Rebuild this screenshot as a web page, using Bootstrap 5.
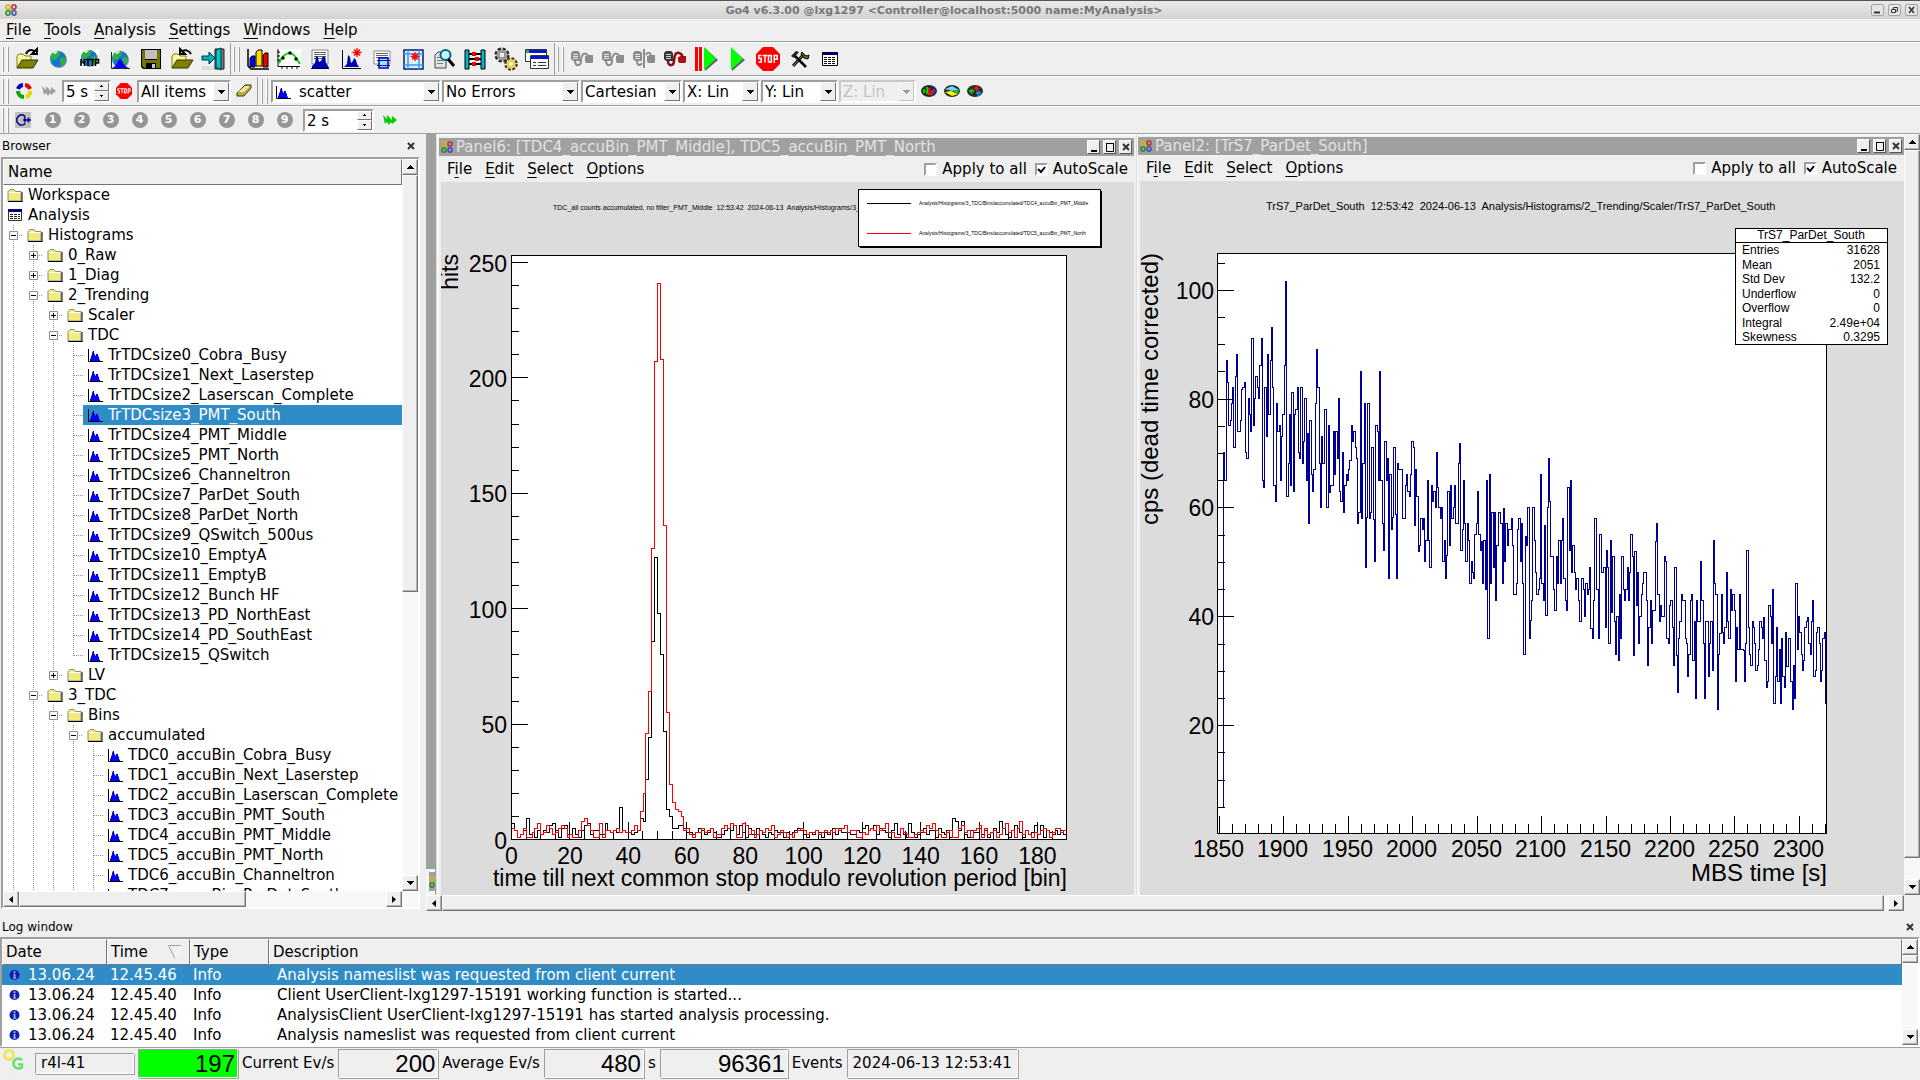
<!DOCTYPE html>
<html lang="en">
<head>
<meta charset="utf-8">
<meta name="viewport" content="width=device-width, initial-scale=1">
<title>Go4 v6.3.00</title>
<link href="https://cdn.jsdelivr.net/npm/bootstrap@5.3.0/dist/css/bootstrap.min.css" rel="stylesheet">
<script src="https://cdn.jsdelivr.net/npm/bootstrap@5.3.0/dist/js/bootstrap.bundle.min.js"></script>
<style>
  :root { --face:#efefef; --dark:#9f9f9f; --deep:#767472; --sel:#308cc6; }
  html, body { height:100%; }
  body { background:var(--face); color:#000; font:15px/20px "DejaVu Sans", sans-serif; overflow:hidden; }
  body > * { flex:none; }
  body > main { flex:1 1 0; min-height:0; }
  a, a:hover { color:inherit; text-decoration:none; }
  button { background:none; border:0; padding:0; color:inherit; }
  svg { display:block; flex:none; }
  u { text-underline-offset:3px; text-decoration-thickness:1px; }
  .ellip { overflow:hidden; white-space:nowrap; }

  .caption { height:19px; border-top:1px solid #55545c; background:linear-gradient(#ebe9e8,#d3d2d0); font-size:11px; line-height:17px; font-weight:bold; color:#76777e; padding:0 2px 0 5px; }
  .cap-btn { width:13px; height:12px; border:1px solid #a3a2a0; border-radius:2px; background:#e6e5e4; }
  .menu { gap:13px; padding-left:6px; }
  .mainmenu { height:23px; border-bottom:1px solid var(--dark); }
  .bar { border-top:1px solid #fff; border-bottom:1px solid var(--dark); }
  .bar-a { height:34px; } .bar-b { height:30px; gap:1px; } .bar-c { height:28px; }
  .grip { width:6px; height:25px; border:solid var(--dark); border-width:0 1px; box-shadow:-1px 0 #fff, inset -1px 0 #fff; margin:0 2px 0 3px; flex:none; }
  .sepa { width:1px; align-self:stretch; background:var(--dark); }
  .bar-a .sepa { margin-left:2px; }
  .tool { width:31px; height:28px; display:flex; align-items:center; justify-content:center; flex:none; }
  .tool-s { width:24px; } .tool-n { width:29px; } .tool-c { width:23px; }
  .num { width:16px; height:16px; border-radius:50%; background:#959595; color:#fff; font-size:11px; line-height:16px; font-weight:bold; }

  .sunk { border:2px solid; border-color:var(--dark) #fff #fff var(--dark); background:#fff; }
  .field { position:relative; height:23px; flex:none; }
  .field select, .field input { appearance:none; width:100%; height:100%; border:0; background:none; outline:0; padding:0 18px 0 2px; font:inherit; color:inherit; line-height:18px; }
  .drop::after { content:""; position:absolute; right:0; top:0; width:16px; height:19px; border:1px solid; border-color:#fff var(--deep) var(--deep) #fff;
    background:linear-gradient(#000,#000) 4px 7px/7px 1px no-repeat, linear-gradient(#000,#000) 5px 8px/5px 1px no-repeat, linear-gradient(#000,#000) 6px 9px/3px 1px no-repeat, linear-gradient(#000,#000) 7px 10px/1px 1px no-repeat, var(--face); pointer-events:none; }
  .drop.off { background:var(--face); color:#c3c3c3; border-color:#c8c8c8 #fff #fff #c8c8c8; }
  .drop.off::after { opacity:.35; }
  .drop.off select { color:#c3c3c3; opacity:1; }
  .drop.pic select { padding-left:26px; }
  .drop.pic svg { position:absolute; left:2px; top:2px; }
  .steps { position:absolute; right:0; top:0; width:15px; height:19px; display:flex; flex-direction:column; }
  .step { flex:1; border:1px solid; border-color:#fff var(--deep) var(--deep) #fff; background:var(--face); display:flex; align-items:center; justify-content:center; }
  .w-5s { width:49px; } .w-all { width:94px; } .w-hist { width:170px; } .w-err { width:138px; } .w-cart { width:101px; } .w-ax { width:77px; } .w-2s { width:71px; }
  .combos { gap:1px; }

  .dock { width:420px; margin-right:6px; flex:none; padding:0 0 2px 1px; }
  .dock-head { font-size:12px; line-height:24px; height:23px; padding:0 5px 0 1px; }
  .log-head { height:26px; padding:6px 6px 0 2px; }
  .frame { border:2px solid; border-color:var(--dark) #fff #fff var(--dark); }
  .colhead { background:var(--face); border:1px solid; border-color:#fff var(--deep) var(--deep) #fff; height:26px; line-height:24px; }
  .tree { background:#fff; }
  .node { display:flex; height:20px; align-items:center; }
  .node-in { display:flex; flex:1; align-items:center; gap:5px; padding-left:4px; height:20px; white-space:nowrap; min-width:0; }
  .node-in.on { background:var(--sel); color:#fff; }
  .sb { background:#f8f8f8; display:flex; flex:none; }
  .sb-v { flex-direction:column; width:16px; } .sb-h { height:16px; }
  .sb-b, .sb-t { background:var(--face); border:1px solid; border-color:#fff var(--deep) var(--deep) #fff; box-shadow:inset -1px -1px #b5b5b5; }
  .sb-b { width:16px; height:16px; flex:none; display:flex; align-items:center; justify-content:center; }

  .mdi { background:#a0a0a0; position:relative; padding-left:10px; }
  .mini { position:absolute; left:0; bottom:0; width:9px; height:26px; overflow:hidden; background:#a0a0a0; border:solid #f4f4f4; border-width:3px 0 4px 3px; padding-top:4px; }
  .win { background:var(--face); border-left:1px solid #dcdcdc; box-shadow:inset 1px 1px #fff; padding:4px 2px 0; min-width:0; }
  .win-a { flex:1 1 700px; } .win-b { flex:1 1 768px; padding:3px 0 0 1px; }
  .win-cap { background:#a0a0a0; color:#e2e2e2; height:18px; line-height:18px; padding:0 2px; gap:3px; }
  .win-btn { width:13px; height:14px; background:var(--face); border:1px solid; border-color:#fff #555 #555 #fff; display:flex; align-items:center; justify-content:center; }
  .win-menu { height:26px; padding-left:8px; padding-right:7px; }
  .win-a .win-menu { padding-right:6px; }
  .tick { appearance:none; width:13px; height:13px; border:2px solid; border-color:var(--dark) #fff #fff var(--dark); background:#fff; margin:0 5px 0 8px; flex:none; }
  .tick:checked { background:#fff url("data:image/svg+xml,%3Csvg xmlns='http://www.w3.org/2000/svg' viewBox='0 0 9 9'%3E%3Cpath d='M1 4l3 3 4-5' fill='none' stroke='%23000' stroke-width='2'/%3E%3C/svg%3E"); }
  .canvas { background:#dcdcdc; margin-left:2px; overflow:hidden; min-height:0; }
  .canvas svg { width:100%; height:100%; font-family:"Liberation Sans", sans-serif; }
  .t5 { font-size:5px; } .t7 { font-size:7px; } .t11 { font-size:11px; } .t12 { font-size:12px; } .t23 { font-size:23px; } .t24 { font-size:24px; }
  .mid { text-anchor:middle; } .fin { text-anchor:end; }
  .ln { fill:none; stroke:#000; shape-rendering:crispEdges; }

  .logs { width:100%; table-layout:fixed; border-collapse:separate; border-spacing:0; background:#fff; }
  .logs th { font-weight:normal; text-align:left; padding:0 3px; }
  .logs td { height:20px; padding:0 3px; white-space:nowrap; overflow:hidden; }
  .logs td:last-child { padding-left:8px; }
  .logs tr.on td { background:var(--sel); color:#fff; }
  .c-date { width:105px; } .c-time { width:83px; } .c-type { width:79px; }
  .logbody { height:110px; }

  .status { height:33px; border-top:1px solid var(--dark); padding:0 2px 2px; }
  .cell { border:1px solid; border-color:var(--dark) #fff #fff var(--dark); box-shadow:1px 1px var(--dark); }
  .host { width:99px; height:21px; padding-left:5px; line-height:19px; margin:0 4px 0 11px; }
  .lcd { width:100px; height:29px; text-align:right; font:24px/28px "Liberation Sans", sans-serif; padding-right:2px; }
  .lcd-go { background:#0f0; }
  .lcd-w { width:128px; }
  .clock { height:29px; line-height:27px; padding:0 5px; }
</style>
</head>
<body class="d-flex flex-column">

<svg width="0" height="0" class="position-absolute" aria-hidden="true">
  <defs>
    <symbol id="rings" viewBox="0 0 12 12"><g fill="none" stroke-width="1.6"><ellipse cx="3" cy="3" rx="2" ry="2.2" stroke="#d9b21c"/><ellipse cx="9" cy="3" rx="2" ry="2.2" stroke="#b8343c"/><ellipse cx="3" cy="9" rx="2" ry="2.2" stroke="#2c8c34"/><ellipse cx="9" cy="9" rx="2" ry="2.2" stroke="#4450c0"/></g><path d="M5 5h2v2H5z" fill="#4be04b"/></symbol>
    <symbol id="hist" viewBox="0 0 16 16"><path d="M1.500 2v12.500H16" fill="none" stroke="#000"/><path d="M3 13v-1l1-1V9l1-1V6l1-2h1v2l1 2 1 1V7h2v2l1 1v2l1 1v1H3z" fill="#00f"/><path d="M6.500 4v5" stroke="#00008b"/></symbol>
    <symbol id="folder" viewBox="0 0 16 16"><path d="M1 14V4.500L3 2.500h4l1.500 2H14V14z" fill="#f1ec7c" stroke="#8a8a8a"/><path d="M2 5.500h11.500" stroke="#fff"/><path d="M15 5v10M1 14.500h14.500" stroke="#000" fill="none"/></symbol>
    <symbol id="sheet" viewBox="0 0 16 16"><path d="M1.500 2.500h13v11h-13z" fill="#fff" stroke="#333"/><path d="M1 2h14v3H1z" fill="#00007a"/><path d="M3 7.500h10M3 9.500h10M3 11.500h10" stroke="#222" stroke-dasharray="3 1"/></symbol>
    <symbol id="gb" viewBox="0 0 20 20"><path d="M10.500 0v20" stroke="#8f8f8f" stroke-dasharray="1 1"/></symbol>
    <symbol id="gt" viewBox="0 0 20 20"><path d="M10.500 0v20M11 10.500h9" stroke="#8f8f8f" stroke-dasharray="1 1"/></symbol>
    <symbol id="gl" viewBox="0 0 20 20"><path d="M10.500 0v11M11 10.500h9" stroke="#8f8f8f" stroke-dasharray="1 1"/></symbol>
    <symbol id="gm" viewBox="0 0 20 20"><path d="M10.500 0v20M16 10.500h4" stroke="#8f8f8f" stroke-dasharray="1 1"/><path d="M6.500 6.500h8v8h-8z" fill="#fff" stroke="#8f8f8f"/><path d="M8 10.500h5" stroke="#000"/></symbol>
    <symbol id="gp" viewBox="0 0 20 20"><path d="M10.500 0v20M16 10.500h4" stroke="#8f8f8f" stroke-dasharray="1 1"/><path d="M6.500 6.500h8v8h-8z" fill="#fff" stroke="#8f8f8f"/><path d="M8 10.500h5M10.500 8v5" stroke="#000"/></symbol>
    <symbol id="gq" viewBox="0 0 20 20"><path d="M10.500 0v7M16 10.500h4" stroke="#8f8f8f" stroke-dasharray="1 1"/><path d="M6.500 6.500h8v8h-8z" fill="#fff" stroke="#8f8f8f"/><path d="M8 10.500h5M10.500 8v5" stroke="#000"/></symbol>
    <symbol id="up" viewBox="0 0 7 4"><path d="M3 0h1v1h1v1h1v1h1v1H0V3h1V2h1V1h1z"/></symbol>
    <symbol id="dn" viewBox="0 0 7 4"><path d="M0 0h7v1H6v1H5v1H4v1H3V3H2V2H1V1H0z"/></symbol>
    <symbol id="lf" viewBox="0 0 4 7"><path d="M4 0v7L0 3.500z"/></symbol>
    <symbol id="rt" viewBox="0 0 4 7"><path d="M0 0v7l4-3.500z"/></symbol>
    <symbol id="x" viewBox="0 0 8 8"><path d="M1 1l6 6M7 1L1 7" stroke="#333" stroke-width="2"/></symbol>
    <symbol id="info" viewBox="0 0 12 12"><circle cx="6" cy="6" r="5.500" fill="#0a1ab4"/><path d="M5 2h2v2H5zM5 5h2v4h1v1H4.500V9H5z" fill="#a9b4f2"/></symbol>
    <symbol id="globe" viewBox="0 0 24 24"><circle cx="13" cy="13" r="8" fill="#333" opacity=".5"/><circle cx="12" cy="12" r="8" fill="#1676c8"/><path d="M5 8c2-4 7-5 10-3l-2 2 1 2-3 1-1 3-3-1-1 3c-2-2-2-5-1-7zM14 11l4-1 2 2-2 5-3 2-1-4z" fill="#2fae4a"/><path d="M7 6c1-2 4-2 5-1l-3 2z" fill="#e7f8e0"/></symbol>
    <symbol id="openf" viewBox="0 0 24 24"><path d="M2 21V9l2-2h4l2 2h6v4" fill="#f6f6a8" stroke="#808000"/><path d="M2 21l5-8h16l-5 8z" fill="#808000" stroke="#333300"/></symbol>
    <symbol id="stop" viewBox="0 0 24 24"><path d="M7 0h10l7 7v10l-7 7H7l-7-7V7z" fill="#f00"/><g fill="none" stroke="#fff" stroke-width="1.500"><path d="M5.500 8.500H2.800v3h2.500v3.500H2.500M6.500 8.500h5M9 8.500v7M12.500 8.500h2.800v6.500h-2.800zM18.200 16V8.500h3v3.800h-3"/></g></symbol>
    <symbol id="arrows" viewBox="0 0 14 12"><path d="M0 1l4 4V1l5 5V2l5 4-5 4-1-2-2 3-2-3-2 2z"/></symbol>
    <symbol id="plug" viewBox="0 0 24 24"><path d="M1 6l2-2h5l2 2v8H3l-2-2z"/><path d="M3 7.500h5M3 9.500h5M3 11.500h5" stroke="#fff" stroke-width=".8"/><path d="M18 8h5v7l-1 1h-6l-1-2V9z"/></symbol>
    <symbol id="pie" viewBox="0 0 16 16"><ellipse cx="8" cy="8" rx="8" ry="6" fill="#2a2a2a"/></symbol>
  </defs>
</svg>

<header class="caption d-flex align-items-center">
  <svg width="12" height="12"><use href="#rings"/></svg>
  <div class="flex-grow-1 text-center ellip">Go4 v6.3.00 @lxg1297 &lt;Controller@localhost:5000 name:MyAnalysis&gt;</div>
  <div class="d-flex gap-1">
    <button class="cap-btn" aria-label="Minimize"><svg width="11" height="10"><path d="M2 7.500h6" stroke="#333" stroke-width="2"/></svg></button>
    <button class="cap-btn" aria-label="Restore"><svg width="11" height="10"><path d="M2.500 4.500h4v3h-4zM4.500 4V2.500h4v3.500H7" fill="none" stroke="#333"/></svg></button>
    <button class="cap-btn" aria-label="Close"><svg width="11" height="10"><path d="M3 2l5 6M8 2L3 8" stroke="#333" stroke-width="1.500"/></svg></button>
  </div>
</header>

<nav class="mainmenu menu d-flex align-items-center">
  <a href="#"><u>F</u>ile</a><a href="#"><u>T</u>ools</a><a href="#"><u>A</u>nalysis</a><a href="#"><u>S</u>ettings</a><a href="#"><u>W</u>indows</a><a href="#"><u>H</u>elp</a>
</nav>

<div class="bar bar-a d-flex align-items-center" role="toolbar" aria-label="Main tools">
  <i class="grip"></i>
  <button class="tool" aria-label="Open file"><svg width="24" height="24"><use href="#openf"/><path d="M11 7c2-5 7-5 9-2M22 2v5h-5z" fill="none" stroke="#000" stroke-width="2"/></svg></button>
  <button class="tool" aria-label="Open remote"><svg width="24" height="24"><use href="#globe"/></svg></button>
  <button class="tool" aria-label="Open HTTP"><svg width="24" height="24"><path d="M3 2h19v19H3z" fill="#fff"/><use href="#globe" y="-1"/><path d="M4 12v7M4 15.500h3.500M7.500 12v7M9 12.500h4M11 12.500V19M13 12.500h4M15.500 12.500V19M18.500 19v-6.500h3V16h-3" stroke="#000" stroke-width="1.600" fill="none"/></svg></button>
  <button class="tool" aria-label="Open histogram server"><svg width="24" height="24"><use href="#globe"/><path d="M4 21c5-1 6-9 8-9s4 8 9 9z" fill="#00f"/><path d="M3.500 5v16.500H22" stroke="#222" fill="none"/></svg></button>
  <button class="tool" aria-label="Save"><svg width="24" height="24"><path d="M2 2h20v20H4l-2-2z" fill="#000"/><path d="M3 3h3v10h12V3h3v18H5l-2-2z" fill="#737300"/><path d="M6 3h12v9H6z" fill="#c0c0c0"/><path d="M7 16h10v5H7z" fill="#000"/><path d="M13 17h3v4h-3z" fill="#c8c8c8"/></svg></button>
  <button class="tool" aria-label="Reopen"><svg width="24" height="24"><use href="#openf"/><path d="M21 7c-2-4-7-5-9-2M10 2v5h5z" fill="none" stroke="#000" stroke-width="2"/></svg></button>
  <button class="tool" aria-label="Exit"><svg width="24" height="24"><path d="M1 19h22v4H1z" fill="#ddd"/><path d="M14 2h9v20h-9z" fill="#777" stroke="#222"/><path d="M15 3l5-2v22l-5-3z" fill="#00c8d2" stroke="#033"/><path d="M1 9h7V5l6 6-6 6v-4H1z" fill="#00b4be" stroke="#033"/></svg></button>
  <i class="sepa"></i><i class="grip"></i>
  <button class="tool" aria-label="New panel"><svg width="24" height="24"><path d="M2 2v17l3 3h18" stroke="#000" fill="none" stroke-width="1.500"/><path d="M4 11l2-2h3v11H4z" fill="#00f" stroke="#000"/><path d="M10 5l2-2h4v16h-6z" fill="#ffd800" stroke="#000"/><path d="M17 8l2-2h3v14h-5z" fill="#e00" stroke="#000"/></svg></button>
  <button class="tool" aria-label="Fit panel"><svg width="24" height="24"><path d="M0 2h24v20H0z" fill="#fff"/><path d="M2 16C6 7 10 6 13 6s6 4 10 11" stroke="#0d0" stroke-width="2" fill="none"/><path d="M1 2v17.500h22M5 19v3M10 19v3M15 19v3M20 19v3M0 5h3M0 9h3M0 13h3" stroke="#000" fill="none"/><circle cx="6" cy="11" r="1.700"/><circle cx="13" cy="6" r="1.700"/><circle cx="19" cy="12" r="1.700"/></svg></button>
  <button class="tool" aria-label="Histogram properties"><svg width="24" height="24"><path d="M4 3h16v14H4z" fill="#fff" stroke="#888"/><path d="M6 5.500h12M6 7.500h12M6 9.500h12M6 11.500h12" stroke="#666"/><path d="M4 21v-2l3-3 1-7 2 1 1 5 2-1 2-5 2 1 1 6 2 3 1 2z" fill="#0000b0"/><path d="M3 21.500h18" stroke="#003"/></svg></button>
  <button class="tool" aria-label="Create histogram"><svg width="24" height="24"><path d="M3.500 3v18.500H22" stroke="#000" fill="none"/><path d="M5 20l3-3 1-9 2 2 1 6 2-2 1-3 2 2 1 4 2 3z" fill="#0000b8"/><path d="M18 1v9M13.500 5.500h9M15 2.500l6 6M21 2.500l-6 6" stroke="#f00" stroke-width="1.300"/></svg></button>
  <button class="tool" aria-label="Condition"><svg width="24" height="24"><path d="M4 4h16v13H4z" fill="#fff" stroke="#888"/><path d="M6 6.500h12M6 8.500h12M6 10.500h12" stroke="#666"/><path d="M9 11h9v10H9z" fill="#9fe0ff" stroke="#0000c0" stroke-width="1.500"/><path d="M7 13.500h13M7 18.500h13" stroke="#0000c0"/></svg></button>
  <button class="tool" aria-label="Create condition"><svg width="24" height="24"><path d="M3 3h19v19H3z" fill="#dff0ff" stroke="#00207a" stroke-width="1.500"/><path d="M7 3v19M18 3v19M3 7h19M3 18h19" stroke="#3a9ae8" stroke-width="1.500"/><path d="M14 5v9M9.500 9.500h9M11 6.500l6 6M17 6.500l-6 6" stroke="#f00" stroke-width="1.300"/></svg></button>
  <button class="tool" aria-label="Event info"><svg width="24" height="24"><path d="M3 8l3-3h8v16H3z" fill="#e4e4e4" stroke="#444"/><path d="M5 10.500h6M5 13.500h6M5 16.500h6" stroke="#777"/><circle cx="13.500" cy="8" r="5" fill="#c8f4f6" stroke="#068" stroke-width="2"/><path d="M16 12l6 7" stroke="#000" stroke-width="3"/></svg></button>
  <button class="tool" aria-label="User GUI"><svg width="24" height="24"><path d="M2 3h4v19H2zM18 3h4v19h-4z" fill="#00b8c4" stroke="#000"/><path d="M6 7h12M6 12h12M6 17h12" stroke="#000" stroke-width="2"/><path d="M9 7h4M12 12h4M9 17h4" stroke="#e00" stroke-width="4"/></svg></button>
  <button class="tool" aria-label="Settings"><svg width="24" height="24" fill="none"><circle cx="8" cy="8" r="5" stroke="#222" stroke-width="5" stroke-dasharray="2.600 1.300"/><circle cx="8" cy="8" r="4" stroke="#999" stroke-width="3"/><circle cx="17" cy="17" r="4.500" stroke="#443800" stroke-width="4.500" stroke-dasharray="2.300 1.200"/><circle cx="17" cy="17" r="3.500" stroke="#e6d84a" stroke-width="2.500"/></svg></button>
  <button class="tool" aria-label="Windows"><svg width="24" height="24"><path d="M.5 2.500h21v12H.5z" fill="#fff" stroke="#333"/><path d="M1 3h20v3H1z" fill="#0018c8"/><path d="M1 3h3v3H1z" fill="#2a8"/><path d="M5.500 8.500h18v13h-18z" fill="#fff" stroke="#333"/><path d="M6 9h17v3H6z" fill="#0018c8"/><path d="M8 15.500h3M13 15.500h8M8 18.500h3M13 18.500h8" stroke="#333"/></svg></button>
  <i class="sepa"></i><i class="grip"></i>
  <button class="tool" aria-label="Launch analysis"><svg width="24" height="24" fill="#8c8c8c"><use href="#plug"/><path d="M5 14c0 6 6 5 6 0s2-10 7-6" fill="none" stroke="#8c8c8c" stroke-width="2"/></svg></button>
  <button class="tool" aria-label="Connect"><svg width="24" height="24" fill="#8c8c8c"><use href="#plug"/><path d="M5 14c0 6 6 5 6 0s2-10 7-6" fill="none" stroke="#8c8c8c" stroke-width="2"/></svg></button>
  <button class="tool" aria-label="Disconnect"><svg width="24" height="24" fill="#8c8c8c"><use href="#plug"/><path d="M5 14c0 5 4 5 5 2M14 8c1-3 4-3 5 0M12 2v19" fill="none" stroke="#8c8c8c" stroke-width="2"/></svg></button>
  <button class="tool" aria-label="Shut down"><svg width="24" height="24"><path d="M1 6l2-2h5l2 2v8H3l-2-2z" fill="#333"/><path d="M3 7.500h5M3 9.500h5M3 11.500h5" stroke="#fff" stroke-width=".8"/><path d="M18 9h5v6l-1 1h-6l-1-2v-4z" fill="#b01018"/><path d="M5 14c0 6 6 5 6 0s2-12 8-6v3" fill="none" stroke="#900810" stroke-width="2.500"/></svg></button>
  <button class="tool" aria-label="Set and start"><svg width="24" height="24"><path d="M1 0h3v24H1zM5 0h3v24H5z" fill="#f00"/><path d="M11 1l13 12-13 11z" fill="#5a5a78"/><path d="M10 0l12 12-12 11z" fill="#0f0"/></svg></button>
  <button class="tool" aria-label="Start"><svg width="24" height="24"><path d="M7 2l13 11L7 24z" fill="#5a5a78"/><path d="M6 0l12 12L6 23z" fill="#0f0"/></svg></button>
  <button class="tool" aria-label="Stop"><svg width="24" height="24"><use href="#stop"/></svg></button>
  <button class="tool" aria-label="Configuration"><svg width="24" height="24"><path d="M6 19L17 7" stroke="#000" stroke-width="3"/><path d="M6 19L17 7" stroke="#b5a642"/><path d="M7 8l12 12" stroke="#000" stroke-width="2.500"/><path d="M4 9l5-5 3 1-5 6z" fill="#222"/><path d="M15 5l2 3 3 1 2-1-1 4-4-1-3-4z" fill="#807010" stroke="#000"/></svg></button>
  <button class="tool" aria-label="Analysis table"><svg width="24" height="24"><path d="M4.500 5.500h15v13h-15z" fill="#fff" stroke="#000"/><path d="M4 5h16v3H4z" fill="#000060"/><path d="M6 10.500h12M6 12.500h12M6 14.500h12M6 16.500h12" stroke="#111" stroke-dasharray="3 1"/></svg></button>
</div>

<div class="bar bar-b d-flex align-items-center" role="toolbar" aria-label="Draw options">
  <i class="grip"></i>
  <button class="tool tool-s" aria-label="Refresh"><svg width="18" height="18" fill="none" stroke-width="4"><path d="M3 7a6 6 0 0 1 5-4" stroke="#00c"/><path d="M10 3a6 6 0 0 1 5 4" stroke="#e00"/><path d="M15 9a6 6 0 0 1-4 6" stroke="#e6d800"/><path d="M9 15a6 6 0 0 1-6-6" stroke="#0a0"/></svg></button>
  <button class="tool tool-s" aria-label="Monitor"><svg width="14" height="12" fill="#a0a0a0"><use href="#arrows"/></svg></button>
  <div class="field sunk w-5s"><input type="text" value="5 s" aria-label="Monitor period"><span class="steps"><button class="step" aria-label="Up"><svg width="3" height="2"><path d="M1 0h1v1h1v1H0V1h1z"/></svg></button><button class="step" aria-label="Down"><svg width="3" height="2"><path d="M0 0h3v1H2v1H1V1H0z"/></svg></button></span></div>
  <button class="tool tool-s" aria-label="Stop monitoring"><svg width="16" height="16"><use href="#stop"/></svg></button>
  <div class="field sunk drop w-all"><select aria-label="Items"><option>All items</option></select></div>
  <button class="tool tool-s" aria-label="Clear"><svg width="16" height="14"><path d="M1 9l8-8h6v3l-7 8H1z" fill="#b8ae3c" stroke="#3c3a10"/><path d="M2 8l7-6h5L8 8z" fill="#f2ec9a"/></svg></button>
  <i class="sepa"></i><i class="grip"></i>
  <div class="combos d-flex">
    <div class="field sunk drop pic w-hist"><svg width="16" height="16"><use href="#hist"/></svg><select aria-label="Draw option"><option>scatter</option></select></div>
    <div class="field sunk drop w-err"><select aria-label="Errors"><option>No Errors</option></select></div>
    <div class="field sunk drop w-cart"><select aria-label="Coordinates"><option>Cartesian</option></select></div>
    <div class="field sunk drop w-ax"><select aria-label="X scale"><option>X: Lin</option></select></div>
    <div class="field sunk drop w-ax"><select aria-label="Y scale"><option>Y: Lin</option></select></div>
    <div class="field sunk drop off w-ax"><select aria-label="Z scale" disabled><option>Z: Lin</option></select></div>
  </div>
  <div class="d-flex">
  <button class="tool tool-c" aria-label="Statistics"><svg width="16" height="16"><use href="#pie"/><path d="M3 10V6M6 11V4" stroke="#0c0" stroke-width="2"/><path d="M8 5v6h3V7" stroke="#e11" stroke-width="2" fill="none"/><path d="M13 6v4" stroke="#33f" stroke-width="2"/></svg></button>
  <button class="tool tool-c" aria-label="Palette"><svg width="16" height="16"><use href="#pie"/><path d="M1 6l7-3 7 4-7 1z" fill="#6cd8ff"/><path d="M1 9l6-1 7 3-6 2z" fill="#ff0"/><path d="M9 8l6-1-1 4z" fill="#1c3"/></svg></button>
  <button class="tool tool-c" aria-label="Colour"><svg width="16" height="16"><use href="#pie"/><path d="M2 8h5M4.500 6v5" stroke="#0c0" stroke-width="2"/><path d="M7 5.500h5M9.500 3v5" stroke="#e11" stroke-width="2"/><path d="M9 10h5M11.500 8v5" stroke="#28e" stroke-width="2"/></svg></button>
  </div>
</div>

<div class="bar bar-c d-flex align-items-center" role="toolbar" aria-label="Macros">
  <i class="grip"></i>
  <button class="tool tool-c me-1" aria-label="C++ command"><svg width="16" height="16"><path d="M0 0h16v16H0z" fill="#c0c0c0"/><path d="M9.500 5.500V3.800A5 5 0 1 0 9.500 12.200V11M8 8h8M10 5.500v5M13.500 5.500v5" stroke="#00008b" stroke-width="1.500" fill="none"/></svg></button>
  <button class="tool tool-n"><span class="num">1</span></button><button class="tool tool-n"><span class="num">2</span></button><button class="tool tool-n"><span class="num">3</span></button><button class="tool tool-n"><span class="num">4</span></button><button class="tool tool-n"><span class="num">5</span></button><button class="tool tool-n"><span class="num">6</span></button><button class="tool tool-n"><span class="num">7</span></button><button class="tool tool-n"><span class="num">8</span></button><button class="tool tool-n"><span class="num">9</span></button>
  <div class="field sunk w-2s ms-1"><input type="text" value="2 s" aria-label="Macro period"><span class="steps"><button class="step" aria-label="Up"><svg width="3" height="2"><path d="M1 0h1v1h1v1H0V1h1z"/></svg></button><button class="step" aria-label="Down"><svg width="3" height="2"><path d="M0 0h3v1H2v1H1V1H0z"/></svg></button></span></div>
  <button class="tool" aria-label="Run"><svg width="14" height="12" fill="#0c0"><use href="#arrows"/></svg></button>
</div>

<main class="d-flex">
  <aside class="dock d-flex flex-column">
    <div class="dock-head d-flex justify-content-between"><span>Browser</span><button aria-label="Close browser"><svg width="8" height="8"><use href="#x"/></svg></button></div>
    <div class="frame flex-grow-1 d-flex flex-column overflow-hidden">
      <div class="d-flex flex-grow-1 overflow-hidden">
        <div class="flex-grow-1 d-flex flex-column overflow-hidden">
          <div class="colhead ps-1 flex-shrink-0">Name</div>
          <div class="tree flex-grow-1 overflow-hidden" id="tree" role="tree"></div>
        </div>
        <div class="sb sb-v"><button class="sb-b" aria-label="Scroll up"><svg width="7" height="4"><use href="#up"/></svg></button><div class="sb-t" style="height:57%"></div><button class="sb-b mt-auto" aria-label="Scroll down"><svg width="7" height="4"><use href="#dn"/></svg></button></div>
      </div>
      <div class="sb sb-h pe-3"><button class="sb-b" aria-label="Scroll left"><svg width="4" height="7"><use href="#lf"/></svg></button><div class="sb-t" style="width:57%"></div><button class="sb-b ms-auto" aria-label="Scroll right"><svg width="4" height="7"><use href="#rt"/></svg></button></div>
    </div>
  </aside>

  <section class="flex-grow-1 d-flex flex-column overflow-hidden">
    <div class="d-flex flex-grow-1 overflow-hidden">
      <div class="mdi flex-grow-1 d-flex overflow-hidden">
        <div class="mini"><svg width="12" height="12"><use href="#rings"/></svg></div>
        <article class="win win-a d-flex flex-column">
          <div class="win-cap d-flex align-items-center flex-shrink-0"><svg width="12" height="12"><use href="#rings"/></svg><span class="flex-grow-1 ellip">Panel6: [TDC4_accuBin_PMT_Middle], TDC5_accuBin_PMT_North</span>
            <button class="win-btn" aria-label="Minimize"><svg width="10" height="10"><path d="M2 9h6" stroke="#000" stroke-width="2"/></svg></button><button class="win-btn" aria-label="Maximize"><svg width="10" height="10"><path d="M1 1.500h8M1.500 1v8.500h7V1" fill="none" stroke="#000"/></svg></button><button class="win-btn" aria-label="Close"><svg width="8" height="8"><use href="#x"/></svg></button></div>
          <div class="win-menu menu d-flex align-items-center flex-shrink-0"><a href="#">F<u>i</u>le</a><a href="#"><u>E</u>dit</a><a href="#"><u>S</u>elect</a><a href="#"><u>O</u>ptions</a>
            <div class="ms-auto d-flex align-items-center"><input class="tick" type="checkbox" id="ap1"><label for="ap1">Apply to all</label><input class="tick" type="checkbox" id="as1" checked><label for="as1">AutoScale</label></div></div>
          <div class="canvas flex-grow-1">
            <svg viewBox="441 182 693 713" id="plotA">
              <text class="t7" x="553" y="210" xml:space="preserve">TDC_all counts accumulated, no filter_PMT_Middle  12:53:42  2024-06-13  Analysis/Histograms/3_</text>
              <path d="M511 255h556v585H511z" fill="#fff"/>
              <path class="ln" id="axesA"/>
              <path class="ln" id="blackA"/>
              <path class="ln" id="redA" style="stroke:#f00"/>
              <path class="ln" d="M511.500 255.500h555v584h-555z"/>
              <g id="labA" class="t23"></g>
              <text class="t23 fin" x="1067" y="886">time till next common stop modulo revolution period [bin]</text>
              <text class="t23 fin" transform="translate(458 254) rotate(-90)">hits</text>
              <path d="M860 191h242v57H860z"/><path d="M858.500 189.500h242v57h-242z" fill="#fff" stroke="#000"/>
              <path d="M867 203.500h44" stroke="#000"/><path d="M867 233.500h44" stroke="#f00"/>
              <text class="t5" x="919" y="205">Analysis/Histograms/3_TDC/Bins/accumulated/TDC4_accuBin_PMT_Middle</text>
              <text class="t5" x="919" y="235">Analysis/Histograms/3_TDC/Bins/accumulated/TDC5_accuBin_PMT_North</text>
            </svg>
          </div>
        </article>
        <article class="win win-b d-flex flex-column">
          <div class="win-cap d-flex align-items-center flex-shrink-0"><svg width="12" height="12"><use href="#rings"/></svg><span class="flex-grow-1 ellip">Panel2: [TrS7_ParDet_South]</span>
            <button class="win-btn" aria-label="Minimize"><svg width="10" height="10"><path d="M2 9h6" stroke="#000" stroke-width="2"/></svg></button><button class="win-btn" aria-label="Maximize"><svg width="10" height="10"><path d="M1 1.500h8M1.500 1v8.500h7V1" fill="none" stroke="#000"/></svg></button><button class="win-btn" aria-label="Close"><svg width="8" height="8"><use href="#x"/></svg></button></div>
          <div class="win-menu menu d-flex align-items-center flex-shrink-0"><a href="#">F<u>i</u>le</a><a href="#"><u>E</u>dit</a><a href="#"><u>S</u>elect</a><a href="#"><u>O</u>ptions</a>
            <div class="ms-auto d-flex align-items-center"><input class="tick" type="checkbox" id="ap2"><label for="ap2">Apply to all</label><input class="tick" type="checkbox" id="as2" checked><label for="as2">AutoScale</label></div></div>
          <div class="canvas flex-grow-1">
            <svg viewBox="1140 181 764 714" id="plotB">
              <text class="t11" x="1266" y="210" xml:space="preserve">TrS7_ParDet_South  12:53:42  2024-06-13  Analysis/Histograms/2_Trending/Scaler/TrS7_ParDet_South</text>
              <path class="ln" d="M1217.500 253.500h609v580h-609z" style="fill:#fff"/>
              <path class="ln" id="traceB" style="stroke:#000099"/>
              <path class="ln" id="axesB"/>
              <g id="labB" class="t23"></g>
              <text class="t24 fin" x="1827" y="881">MBS time [s]</text>
              <text class="t24 fin" transform="translate(1158 253) rotate(-90)">cps (dead time corrected)</text>
              <path class="ln" d="M1735.500 228.500h152v116h-152zM1735 242.500h152" style="fill:#fff"/>
              <g id="statB" class="t12"></g>
            </svg>
          </div>
        </article>
      </div>
      <div class="sb sb-v"><button class="sb-b" aria-label="Scroll up"><svg width="7" height="4"><use href="#up"/></svg></button><div class="sb-t" style="height:93%"></div><button class="sb-b mt-auto" aria-label="Scroll down"><svg width="7" height="4"><use href="#dn"/></svg></button></div>
    </div>
    <div class="sb sb-h me-3"><button class="sb-b" aria-label="Scroll left"><svg width="4" height="7"><use href="#lf"/></svg></button><div class="sb-t flex-grow-1 me-1"></div><button class="sb-b" aria-label="Scroll right"><svg width="4" height="7"><use href="#rt"/></svg></button></div>
  </section>
</main>

<section>
  <div class="dock-head log-head d-flex justify-content-between align-items-center"><span>Log window</span><button aria-label="Close log"><svg width="8" height="8"><use href="#x"/></svg></button></div>
  <div class="frame logbody d-flex overflow-hidden">
    <div class="flex-grow-1 overflow-hidden">
      <table class="logs">
        <colgroup><col class="c-date"><col class="c-time"><col class="c-type"><col></colgroup>
        <thead><tr><th class="colhead">Date</th><th class="colhead"><span class="d-flex justify-content-between align-items-center pe-1">Time<svg width="14" height="14"><path d="M7 13.500L.5.500h13" fill="none" stroke="#9f9f9f"/><path d="M13.500.500L7 13.500" stroke="#fff"/></svg></span></th><th class="colhead">Type</th><th class="colhead">Description</th></tr></thead>
        <tbody>
          <tr class="on"><td><span class="d-flex align-items-center gap-2 ps-1"><svg width="11" height="12"><use href="#info"/></svg>13.06.24</span></td><td>12.45.46</td><td>Info</td><td>Analysis nameslist was requested from client current</td></tr>
          <tr><td><span class="d-flex align-items-center gap-2 ps-1"><svg width="11" height="12"><use href="#info"/></svg>13.06.24</span></td><td>12.45.40</td><td>Info</td><td>Client UserClient-lxg1297-15191 working function is started...</td></tr>
          <tr><td><span class="d-flex align-items-center gap-2 ps-1"><svg width="11" height="12"><use href="#info"/></svg>13.06.24</span></td><td>12.45.40</td><td>Info</td><td>AnalysisClient UserClient-lxg1297-15191 has started analysis processing.</td></tr>
          <tr><td><span class="d-flex align-items-center gap-2 ps-1"><svg width="11" height="12"><use href="#info"/></svg>13.06.24</span></td><td>12.45.40</td><td>Info</td><td>Analysis nameslist was requested from client current</td></tr>
        </tbody>
      </table>
    </div>
    <div class="sb sb-v"><button class="sb-b" aria-label="Scroll up"><svg width="7" height="4"><use href="#up"/></svg></button><div class="sb-t" style="height:8%"></div><button class="sb-b mt-auto" aria-label="Scroll down"><svg width="7" height="4"><use href="#dn"/></svg></button></div>
  </div>
</section>

<footer class="status d-flex align-items-center">
  <svg width="22" height="30" fill="none"><circle cx="7" cy="7" r="4.500" stroke="#f0e458" stroke-width="3"/><path d="M20 12a5 5 0 1 0 0 7v-2.500h-4" stroke="#66e066" stroke-width="2.500"/><circle cx="7" cy="24" r="4" stroke="#d4f0dc" stroke-dasharray="1 1"/></svg>
  <div class="cell host">r4l-41</div>
  <output class="cell lcd lcd-go me-1">197</output><span>Current Ev/s</span>
  <output class="cell lcd ms-1 me-1">200</output><span>Average Ev/s</span>
  <output class="cell lcd ms-1 me-1">480</output><span>s</span>
  <output class="cell lcd lcd-w ms-1 me-1">96361</output><span>Events</span>
  <div class="cell clock ms-1">2024-06-13 12:53:41</div>
</footer>

<script>
// Tree rows: guide cells, icon, caption. b=line t=tee l=corner m=open p=closed q=closed, last child.
const rows = [
  ["", "folder", "Workspace"], ["", "sheet", "Analysis"], ["m", "folder", "Histograms"],
  ["bp", "folder", "0_Raw"], ["bp", "folder", "1_Diag"], ["bm", "folder", "2_Trending"],
  ["bbp", "folder", "Scaler"], ["bbm", "folder", "TDC"],
  ...["0_Cobra_Busy","1_Next_Laserstep","2_Laserscan_Complete","3_PMT_South","4_PMT_Middle","5_PMT_North","6_Channeltron","7_ParDet_South","8_ParDet_North","9_QSwitch_500us","10_EmptyA","11_EmptyB","12_Bunch HF","13_PD_NorthEast","14_PD_SouthEast","15_QSwitch"]
    .map((n, i) => [i === 15 ? "bbbl" : "bbbt", "hist", "TrTDCsize" + n]),
  ["bbq", "folder", "LV"], ["bm", "folder", "3_TDC"], ["bbm", "folder", "Bins"], ["bbbm", "folder", "accumulated"],
  ...["0_accuBin_Cobra_Busy","1_accuBin_Next_Laserstep","2_accuBin_Laserscan_Complete","3_accuBin_PMT_South","4_accuBin_PMT_Middle","5_accuBin_PMT_North","6_accuBin_Channeltron","7_accuBin_ParDet_South"]
    .map(n => ["bbbbt", "hist", "TDC" + n])
];
document.getElementById("tree").innerHTML = rows.map(([g, ic, t]) =>
  `<div class="node" role="treeitem">${[...g].map(c => `<svg width="20" height="20"><use href="#g${c}"/></svg>`).join("")}<span class="node-in${t.includes("size3_") ? " on" : ""}"><svg width="16" height="16"><use href="#${ic}"/></svg>${t}</span></div>`).join("");

const $ = id => document.getElementById(id);
const label = (x, y, t, c) => `<text class="${c}" x="${x}" y="${y}">${t}</text>`;

// Left plot: 190 bins, counts per bin
const AX = v => 511.5 + v * 2.922, AY = v => 839.5 - v * 2.308;
const black = [7,4,1,2,4,9,2,3,1,4,2,4,3,6,7,4,1,5,6,2,2,5,2,1,4,6,7,2,4,4,2,2,7,4,3,4,3,14,4,3,3,2,3,4,9,8,26,44,86,122,98,80,47,13,10,5,5,6,6,5,3,3,2,3,5,4,2,3,5,3,1,1,2,4,5,4,6,2,6,3,1,5,2,2,5,4,2,1,3,2,4,3,3,1,3,2,3,4,5,4,2,1,3,2,4,3,1,3,2,4,5,2,5,3,3,3,2,2,4,3,5,6,4,5,6,2,5,4,3,1,4,7,2,5,2,1,7,3,1,2,3,5,2,4,4,1,5,3,2,4,1,9,8,4,8,2,1,4,3,3,5,2,4,1,3,5,3,8,5,2,1,4,6,5,3,1,4,2,3,6,2,6,1,4,3,2,4,2,4,2];
const red = [5,4,1,2,5,1,1,3,5,7,2,3,6,5,2,3,5,6,5,1,2,1,1,4,8,9,6,4,1,1,7,1,4,4,3,4,5,3,4,3,3,4,6,4,12,20,46,64,126,207,241,208,136,55,24,16,13,12,10,4,5,2,1,3,3,5,3,4,5,1,2,2,5,6,5,7,6,1,1,7,6,2,4,1,2,4,3,5,4,6,1,2,4,3,1,2,1,3,4,5,4,2,3,3,4,2,3,4,3,4,3,5,4,5,6,3,4,4,1,1,3,2,4,5,4,6,4,5,7,3,3,1,1,5,3,2,1,1,2,3,4,3,6,5,7,4,2,1,1,3,4,1,1,5,6,3,4,1,4,5,6,1,5,2,3,4,1,2,5,7,3,4,1,5,8,2,4,2,1,3,2,4,5,4,1,3,5,5,3,4];
const steps = a => "M511.500 839.500" + a.map((v, i) => `V${AY(v).toFixed(1)}H${AX(i + 1).toFixed(1)}`).join("");
$("blackA").setAttribute("d", steps(black));
$("redA").setAttribute("d", steps(red));
let d = "", s = "";
for (let v = 0; v <= 250; v += 10) {
  d += `M511 ${AY(v)}h${v % 50 ? 8 : 17}`;
  if (v % 50 === 0) s += label(507, AY(v) + 9, v, "fin");
}
for (let v = 0; v <= 190; v += 5) {
  d += `M${AX(v)} 839v${v % 20 ? -8 : -17}`;
  if (v % 20 === 0) s += label(AX(v), 864, v, "mid");
}
$("axesA").setAttribute("d", d); $("labA").innerHTML = s;

// Right plot: step trace, level changes as x,y pairs on a grid of thirds
const one = "25 1611 25 547 28 631 34 271 37 337 40 466 46 450 49 400 53 352 55 532 61 319 65 253 67 485 76 450 79 358 82 352 88 337 91 547 94 565 100 385 103 433 107 485 109 205 115 466 118 385 121 319 127 352 130 385 133 286 140 205 142 631 146 652 148 352 154 499 158 253 161 433 166 271 170 172 172 352 175 646 181 694 185 400 187 485 194 466 196 631 199 499 202 433 208 286 212 34 214 680 220 580 224 433 227 646 229 367 235 664 238 433 241 418 248 352 250 547 253 565 256 352 262 580 265 514 268 385 274 631 278 490 281 760 283 451 289 613 292 664 295 598 301 400 305 238 307 352 313 580 317 712 320 499 322 580 328 418 334 712 341 466 343 667 346 646 355 485 358 613 361 485 367 565 371 385 373 664 376 694 382 547 386 727 388 646 394 613 397 631 400 598 403 571 409 466 412 514 415 485 421 532 424 565 427 760 430 727 437 304 439 745 442 580 448 400 451 892 454 743 457 400 463 745 466 727 469 532 475 748 479 874 481 466 487 485 491 631 494 304 496 631 502 760 506 841 508 514 514 631 518 565 521 925 523 613 529 778 532 743 535 532 541 733 545 925 548 580 550 598 562 745 571 646 574 613 577 664 583 680 586 613 589 514 595 532 598 766 602 598 604 680 610 844 613 826 616 745 622 778 625 745 628 874 631 811 638 631 640 811 643 892 649 646 652 694 655 664 661 712 665 547 667 652 670 712 676 745 679 712 682 874 688 811 692 925 694 857 697 664 703 826 707 646 709 745 715 712 718 646 721 760 730 580 734 520 736 841 742 778 746 631 748 760 751 874 757 760 760 811 763 940 769 874 772 907 776 925 778 793 784 760 788 664 790 793 796 841 799 814 802 940 805 811 811 958 815 631 817 1105 823 613 826 940 829 727 835 892 838 727 842 991 844 826 850 727 856 760 862 940 866 715 868 874 871 760 877 826 880 778 889 745 892 826 895 973 904 940 907 778 910 745 916 874 919 760 922 940 925 1153 931 799 934 826 937 712 943 1105 946 1052 949 991 952 712 958 811 961 907 964 973 970 958 973 925 977 613 979 940 985 991 988 766 991 1036 997 712 1001 565 1003 694 1006 859 1015 958";
const two = "43 481 49 319 52 400 55 271 61 400 64 271 68 205 70 385 76 451 79 481 82 112 88 301 92 91 94 367 97 286 103 367 106 418 109 385 115 451 119 514 124 385 130 418 133 499 136 400 142 433 145 418 149 352 151 535 157 565 160 451 163 205 169 418 175 565 178 253 184 367 190 352 197 532 200 301 202 352 205 580 211 271 214 487 217 319 223 514 226 613 229 499 235 631 238 433 241 565 244 319 250 418 253 451 256 418 262 352 265 451 268 367 271 253 277 319 281 616 283 304 289 466 292 367 295 580 298 499 304 433 307 400 310 367 319 451 322 646 325 532 331 451 334 580 337 481 346 274 350 220 352 433 358 514 361 466 364 499 373 319 376 334 379 565 385 580 388 466 391 451 397 532 400 646 403 352 409 616 412 727 415 565 418 514 424 433 427 451 436 565 439 580 442 679 445 613 451 451 454 433 457 631 463 514 467 745 470 451 472 514 481 334 484 451 490 580 493 745 496 514 505 679 508 580 511 514 517 661 521 271 523 400 526 433 532 778 535 613 538 550 544 433 547 547 550 580 553 532 559 367 562 514 565 565 571 418 574 481 577 433 583 481 587 694 590 532 592 598 599 433 601 598 610 601 613 694 616 580 619 301 625 532 628 613 631 646 637 514 640 532 643 580 646 661 652 646 655 598 658 514 664 532 667 565 670 502 673 631 679 712 682 694 685 466 691 499 694 580 698 418 700 760 706 679 710 532 712 694 718 598 722 760 725 565 727 679 733 712 737 547 739 649 745 565 751 694 757 778 760 646 763 745 766 400 772 598 775 499 778 547 784 613 787 661 790 631 793 532 799 514 802 502 805 580 811 613 814 514 818 451 820 679 826 661 829 547 832 532 838 580 841 694 844 661 847 565 853 547 856 760";
d = "";
[[one, 1215, 270], [two, 1540, 450]].forEach(([str, ox, oy]) => {
  const n = str.split(" ").map(Number);
  for (let i = 0; i < n.length; i += 2) {
    const x = Math.floor(ox + n[i] / 3) + 0.5, y = Math.floor(oy + n[i + 1] / 3) + 0.5;
    d += d ? `H${x}V${y}` : `M${x} ${y}`;
  }
});
$("traceB").setAttribute("d", d);
d = ""; s = "";
for (let v = 5; v <= 105; v += 5) {
  const y = Math.round(834 - v * 5.442) + 0.5;
  d += `M1217 ${y}h${v % 20 ? 8 : 17}`;
  if (v % 20 === 0) s += label(1214, y + 8, v, "fin");
}
for (let v = 1850; v <= 2320; v += 10) {
  const x = Math.round(1219 + (v - 1850) * 1.2885) + 0.5;
  d += `M${x} 833v${v % 50 ? -9 : -17}`;
  if (v % 50 === 0) s += label(x - 1, 857, v, "mid");
}
$("axesB").setAttribute("d", d); $("labB").innerHTML = s;
s = label(1811, 239, "TrS7_ParDet_South", "mid");
[["Entries","31628",254],["Mean","2051",269],["Std Dev","132.2",283],["Underflow","0",298],["Overflow","0",312],["Integral","2.49e+04",327],["Skewness","0.3295",341]]
  .forEach(([k, v, y]) => s += label(1742, y, k, "") + label(1880, y, v, "fin"));
$("statB").innerHTML = s;
</script>
</body>
</html>
